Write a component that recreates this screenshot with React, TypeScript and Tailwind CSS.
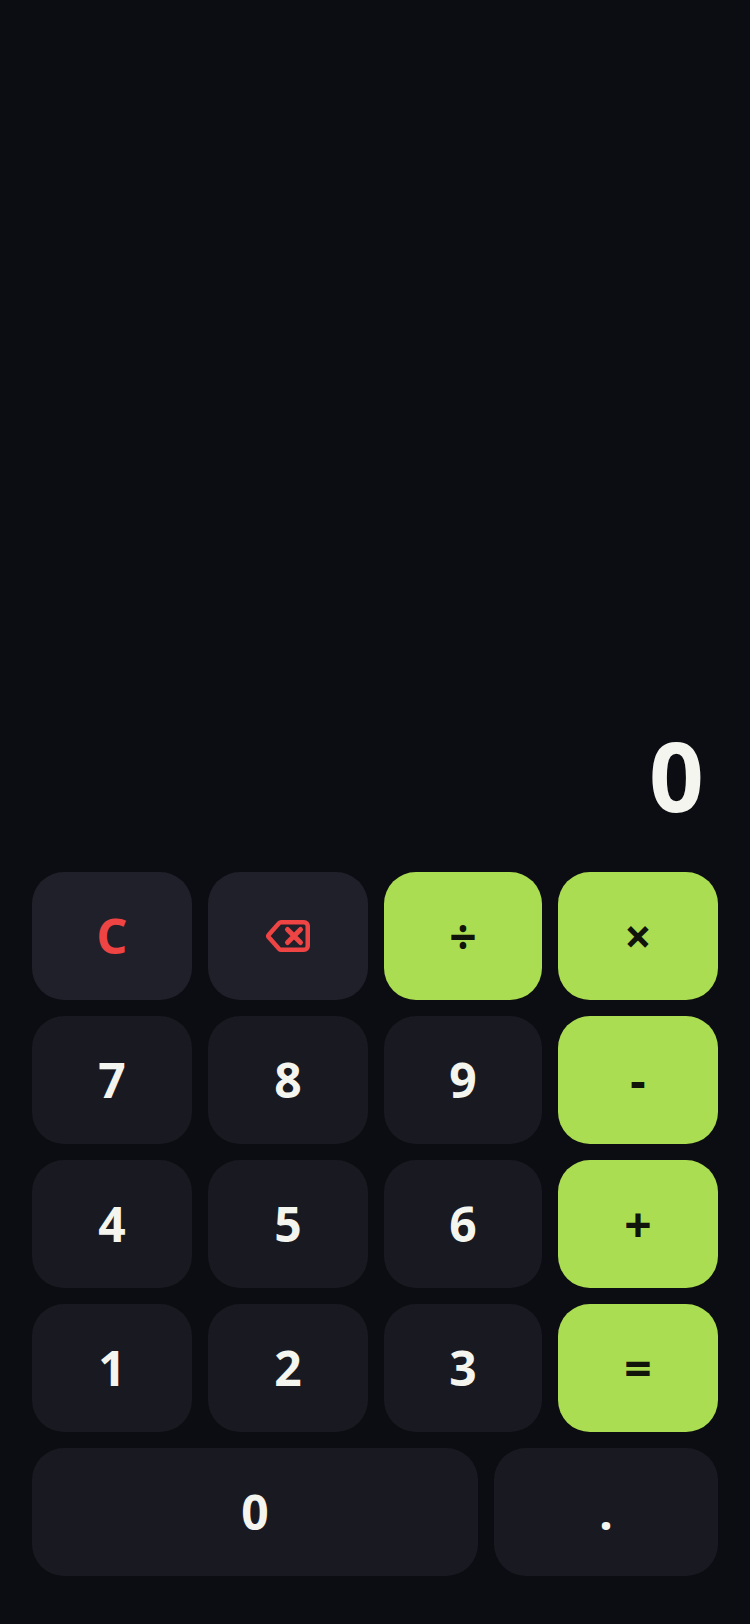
const keyBase =
  "flex h-32 items-center justify-center rounded-[32px] text-[48px] font-bold";

const Key = ({ label, className }: { label: string; className: string }) => (
  <button className={`${keyBase} ${className}`}>{label}</button>
);

const BackspaceIcon = () => (
  <svg width="44" height="32" viewBox="0 0 44 32" fill="none" stroke="#ef4444" strokeLinejoin="round" strokeLinecap="round">
    <path strokeWidth="4.5" d="M15 2.25H38a3.75 3.75 0 0 1 3.75 3.75V26a3.75 3.75 0 0 1-3.75 3.75H15a2.5 2.5 0 0 1-1.8-.8L3 17.6a2.4 2.4 0 0 1 0-3.2L13.2 3.05a2.5 2.5 0 0 1 1.8-.8Z" />
    <path strokeWidth="5" d="M21.5 9.5L34.5 22.5M34.5 9.5L21.5 22.5" />
  </svg>
);

export default function App() {
  const digit = "bg-[#191a21] text-[#f5f5f0]";
  const top = "bg-[#20202a]";
  const op = "bg-[#abdd52] text-[#10140a]";

  return (
    <div
      className="flex h-[1624px] w-[750px] flex-col justify-end bg-[#0c0d12] px-8 pb-12"
      style={{ fontFamily: '"Noto Sans", sans-serif' }}
    >
      <div className="mb-[31px] pr-3.5 text-right text-[96px] leading-[132px] font-bold text-[#f5f5f0]">0</div>
      <div className="grid grid-cols-[160px_160px_158px_160px] gap-4">
        <Key label="C" className={`${top} text-[#ef4444]`} />
        <button className={`${keyBase} ${top}`}><BackspaceIcon /></button>
        <Key label="÷" className={op} />
        <Key label="×" className={op} />
        <Key label="7" className={digit} />
        <Key label="8" className={digit} />
        <Key label="9" className={digit} />
        <Key label="-" className={op} />
        <Key label="4" className={digit} />
        <Key label="5" className={digit} />
        <Key label="6" className={digit} />
        <Key label="+" className={op} />
        <Key label="1" className={digit} />
        <Key label="2" className={digit} />
        <Key label="3" className={digit} />
        <Key label="=" className={op} />
      </div>
      <div className="mt-4 grid grid-cols-[446px_224px] gap-4">
        <Key label="0" className={digit} />
        <Key label="." className={digit} />
      </div>
    </div>
  );
}
